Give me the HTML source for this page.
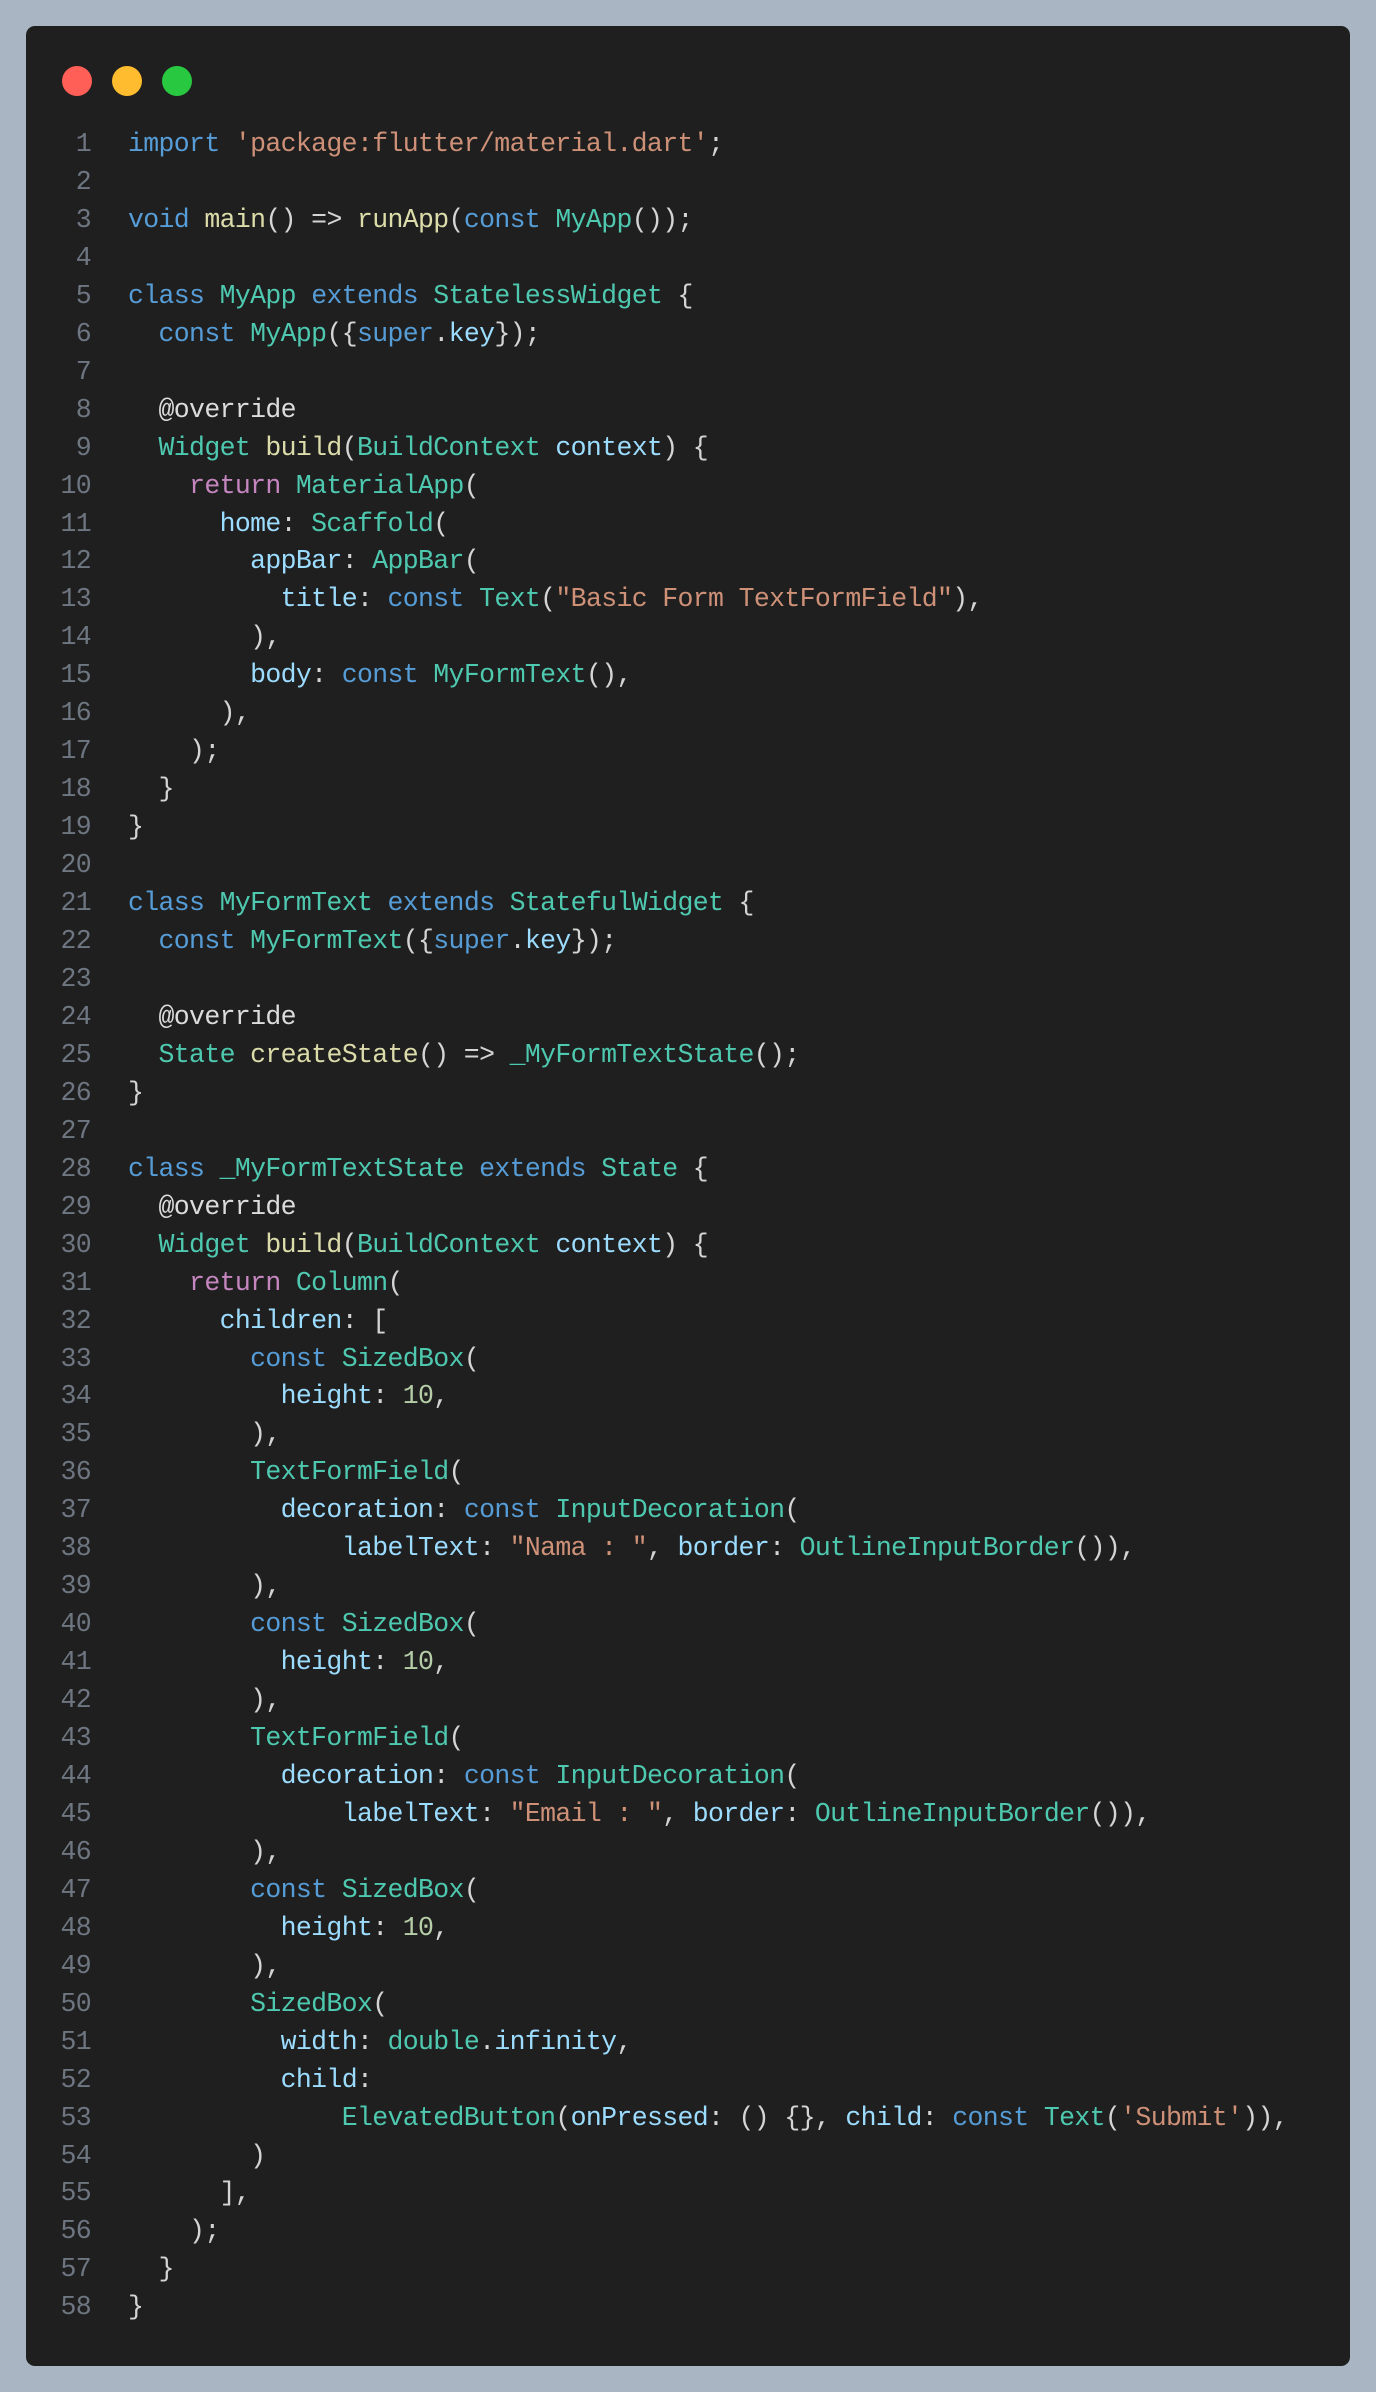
<!DOCTYPE html>
<html><head><meta charset="utf-8"><style>
html,body{margin:0;padding:0;}
body{width:1376px;height:2392px;background:#a9b5c2;position:relative;overflow:hidden;}
.win{position:absolute;left:26px;top:26px;width:1324px;height:2340px;background:#1f1f1f;border-radius:9px;}
.dot{position:absolute;top:66px;width:30px;height:30px;border-radius:50%;}
pre{position:absolute;margin:0;top:126px;font-family:"Liberation Mono",monospace;font-size:26.5px;letter-spacing:-0.64px;line-height:37.96px;}
.ln{left:40px;width:51px;text-align:right;color:#6e7681;}
.code{left:128px;color:#d4d4d4;}
.k{color:#569cd6}.c{color:#c586c0}.s{color:#ce9178}.t{color:#4ec9b0}.f{color:#dcdcaa}.v{color:#9cdcfe}.n{color:#b5cea8}.a{color:#dcdcdc}
</style></head><body>
<div class="win"></div>
<div class="dot" style="left:62px;background:#ff5f57"></div>
<div class="dot" style="left:112px;background:#febc2e"></div>
<div class="dot" style="left:162px;background:#28c840"></div>
<pre class="ln">1
2
3
4
5
6
7
8
9
10
11
12
13
14
15
16
17
18
19
20
21
22
23
24
25
26
27
28
29
30
31
32
33
34
35
36
37
38
39
40
41
42
43
44
45
46
47
48
49
50
51
52
53
54
55
56
57
58</pre>
<pre class="code"><span class="k">import</span> <span class="s">'package:flutter/material.dart'</span>;

<span class="k">void</span> <span class="f">main</span>() =&gt; <span class="f">runApp</span>(<span class="k">const</span> <span class="t">MyApp</span>());

<span class="k">class</span> <span class="t">MyApp</span> <span class="k">extends</span> <span class="t">StatelessWidget</span> {
  <span class="k">const</span> <span class="t">MyApp</span>({<span class="k">super</span>.<span class="v">key</span>});

  <span class="a">@override</span>
  <span class="t">Widget</span> <span class="f">build</span>(<span class="t">BuildContext</span> <span class="v">context</span>) {
    <span class="c">return</span> <span class="t">MaterialApp</span>(
      <span class="v">home</span>: <span class="t">Scaffold</span>(
        <span class="v">appBar</span>: <span class="t">AppBar</span>(
          <span class="v">title</span>: <span class="k">const</span> <span class="t">Text</span>(<span class="s">"Basic Form TextFormField"</span>),
        ),
        <span class="v">body</span>: <span class="k">const</span> <span class="t">MyFormText</span>(),
      ),
    );
  }
}

<span class="k">class</span> <span class="t">MyFormText</span> <span class="k">extends</span> <span class="t">StatefulWidget</span> {
  <span class="k">const</span> <span class="t">MyFormText</span>({<span class="k">super</span>.<span class="v">key</span>});

  <span class="a">@override</span>
  <span class="t">State</span> <span class="f">createState</span>() =&gt; <span class="t">_MyFormTextState</span>();
}

<span class="k">class</span> <span class="t">_MyFormTextState</span> <span class="k">extends</span> <span class="t">State</span> {
  <span class="a">@override</span>
  <span class="t">Widget</span> <span class="f">build</span>(<span class="t">BuildContext</span> <span class="v">context</span>) {
    <span class="c">return</span> <span class="t">Column</span>(
      <span class="v">children</span>: [
        <span class="k">const</span> <span class="t">SizedBox</span>(
          <span class="v">height</span>: <span class="n">10</span>,
        ),
        <span class="t">TextFormField</span>(
          <span class="v">decoration</span>: <span class="k">const</span> <span class="t">InputDecoration</span>(
              <span class="v">labelText</span>: <span class="s">"Nama : "</span>, <span class="v">border</span>: <span class="t">OutlineInputBorder</span>()),
        ),
        <span class="k">const</span> <span class="t">SizedBox</span>(
          <span class="v">height</span>: <span class="n">10</span>,
        ),
        <span class="t">TextFormField</span>(
          <span class="v">decoration</span>: <span class="k">const</span> <span class="t">InputDecoration</span>(
              <span class="v">labelText</span>: <span class="s">"Email : "</span>, <span class="v">border</span>: <span class="t">OutlineInputBorder</span>()),
        ),
        <span class="k">const</span> <span class="t">SizedBox</span>(
          <span class="v">height</span>: <span class="n">10</span>,
        ),
        <span class="t">SizedBox</span>(
          <span class="v">width</span>: <span class="t">double</span>.<span class="v">infinity</span>,
          <span class="v">child</span>:
              <span class="t">ElevatedButton</span>(<span class="v">onPressed</span>: () {}, <span class="v">child</span>: <span class="k">const</span> <span class="t">Text</span>(<span class="s">'Submit'</span>)),
        )
      ],
    );
  }
}</pre>
</body></html>
